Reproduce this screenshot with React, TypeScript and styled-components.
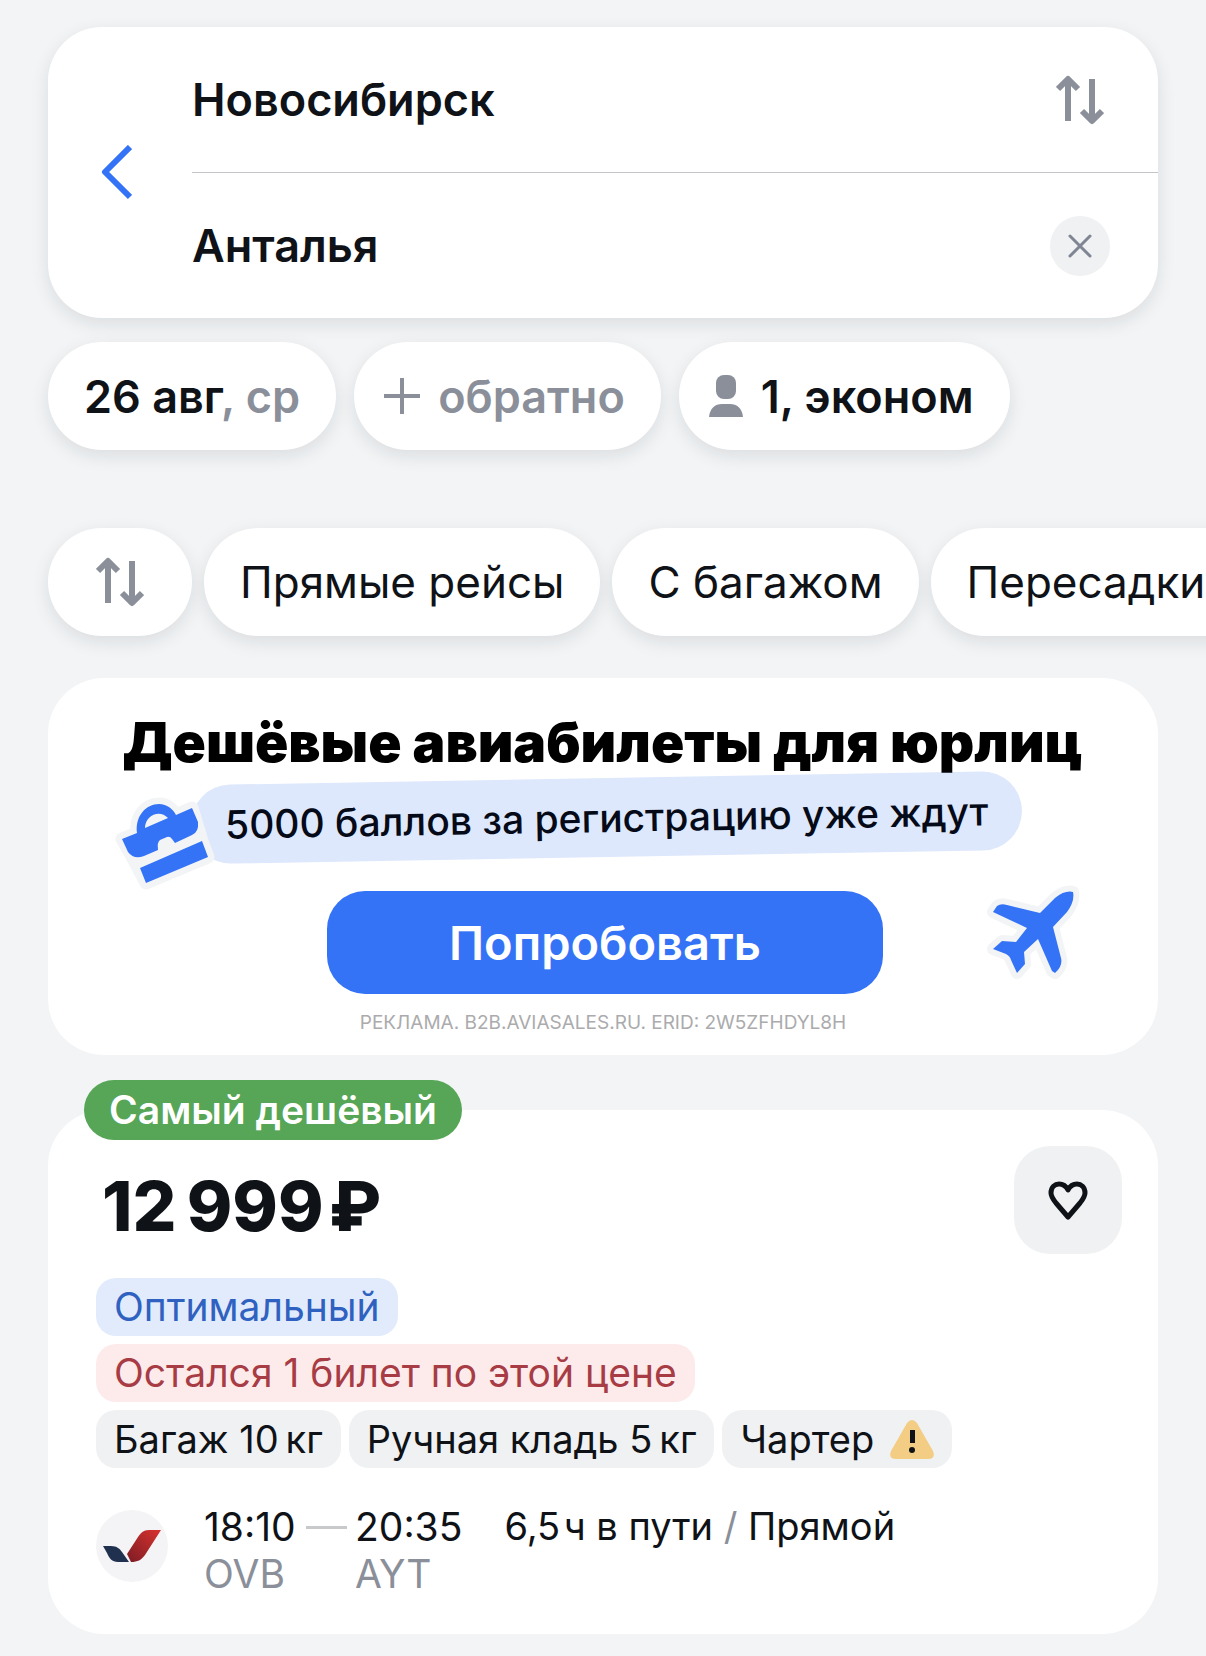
import React, { useState } from "react";
import styled, { createGlobalStyle } from "styled-components";

const colors = {
  page: "#f2f4f6",
  card: "#ffffff",
  text: "#0f1217",
  muted: "#8a8f9a",
  blue: "#3473f6",
  soft: "#f0f1f3",
};

interface Tag {
  label: string;
  tone: "info" | "alert" | "plain";
  warning?: boolean;
}

const FILTERS = ["Прямые рейсы", "С багажом", "Пересадки"];

const TAG_ROWS: Tag[][] = [
  [{ label: "Оптимальный", tone: "info" }],
  [{ label: "Остался 1 билет по этой цене", tone: "alert" }],
  [
    { label: "Багаж 10\u2009кг", tone: "plain" },
    { label: "Ручная кладь 5\u2009кг", tone: "plain" },
    { label: "Чартер", tone: "plain", warning: true },
  ],
];

const TAG_TONES = {
  info: { bg: "#e2ebfc", fg: "#2f62c0", size: 39 },
  alert: { bg: "#fdebec", fg: "#a83c45", size: 39 },
  plain: { bg: colors.soft, fg: colors.text, size: 38 },
};

const SwapIcon = () => (
  <svg width="48" height="50" viewBox="0 0 48 50" fill="none" stroke={colors.muted} strokeWidth="6">
    <path d="M12 46V4M2 14L12 4L22 14" strokeLinejoin="round" />
    <path d="M36 4V46M26 36L36 46L46 36" strokeLinejoin="round" />
  </svg>
);

const BackIcon = () => (
  <svg width="32" height="56" viewBox="0 0 32 56" fill="none" stroke={colors.blue} strokeWidth="6">
    <path d="M30 2L5 27L30 52" strokeLinejoin="round" />
  </svg>
);

const CloseIcon = () => (
  <svg width="24" height="24" viewBox="0 0 24 24" fill="none" stroke="#7f8592" strokeWidth="3">
    <path d="M2 2L22 22M22 2L2 22" strokeLinecap="round" />
  </svg>
);

const PlusIcon = () => (
  <svg width="36" height="36" viewBox="0 0 36 36" fill="none" stroke={colors.muted} strokeWidth="4">
    <path d="M18 0V36M0 18H36" />
  </svg>
);

const PersonIcon = () => (
  <svg width="34" height="42" viewBox="0 0 34 42" fill={colors.muted}>
    <rect x="7" y="0" width="20" height="24" rx="8" />
    <path d="M0 42C1 33 6 29 13 29H21C28 29 33 33 34 42Z" />
  </svg>
);

const HeartIcon = () => (
  <svg width="40" height="40" viewBox="0 0 40 40" fill="none" stroke={colors.text} strokeWidth="5">
    <path
      d="M20 37L8 23C4 18 3 16 3 13C3 7 7 4 11 4C15 4 18 6 20 10C22 6 25 4 29 4C33 4 37 7 37 13C37 16 36 18 32 23Z"
      strokeLinejoin="round"
    />
  </svg>
);

const WarningIcon = () => (
  <svg width="44" height="39" viewBox="0 0 44 39">
    <path d="M17 3Q22 -3 27 3L43 31Q46 39 38 39H6Q-2 39 1 31Z" fill="#f4cd84" />
    <rect x="20" y="10" width="5" height="13" fill={colors.text} />
    <circle cx="22" cy="30" r="3" fill={colors.text} />
  </svg>
);

const CASE_OUTLINE =
  "M123 839L138 833C136 816 147 804 160 804C168 804 174 809 177 815L193 808L203 841L209 857L147 883L131 853Z";

const CASE_SHAPE =
  "M123 839L138 833C136 816 147 804 160 804C168 804 174 809 177 815L193 808L199 822Q200 832 193 835L176 843L173 839Q171 836 168 837L161 840Q158 842 159 850L145 856Q135 860 129 852ZM146 828L169 818C161 809 146 815 146 828ZM141 868L203 841L209 857L147 883Z";

const CaseIcon = () => (
  <svg width="104" height="100" viewBox="112 794 104 100" fillRule="evenodd">
    <path d={CASE_OUTLINE} fill="#f2f4f6" stroke="#f2f4f6" strokeWidth="13" strokeLinejoin="round" />
    <path d={CASE_SHAPE} fill={colors.blue} />
  </svg>
);

const PLANE_SHAPE =
  "M1074 891Q1066 889 1056 897L1041 912L1008 904Q1002 902 998 905L994 911L1028 927L1017 941L1003 940L994 948L1007 953Q1011 955 1012 959L1018 972L1026 963L1025 951L1039 938L1053 970L1056 972Q1064 965 1062 957L1054 926L1068 911Q1076 900 1074 891Z";

const PlaneIcon = () => (
  <svg width="100" height="100" viewBox="984 882 100 100">
    <path d={PLANE_SHAPE} fill="#f2f4f6" stroke="#f2f4f6" strokeWidth="12" strokeLinejoin="round" />
    <path d={PLANE_SHAPE} fill={colors.blue} />
  </svg>
);

const AirlineLogo = () => (
  <svg width="72" height="72" viewBox="96 1510 72 72">
    <defs>
      <linearGradient id="wing" x1="1" y1="0" x2="0" y2="1">
        <stop offset="0" stopColor="#d9322f" />
        <stop offset="1" stopColor="#7c1c24" />
      </linearGradient>
    </defs>
    <circle cx="132" cy="1546" r="36" fill="#f4f4f6" />
    <path d="M103 1546H111C117 1546 120 1549 122 1552L129 1562H118C112 1562 109 1558 107 1553Z" fill="#20304f" />
    <path d="M161 1530H149C143 1530 141 1533 138 1537L127 1554L131 1562C138 1562 141 1560 145 1555Z" fill="url(#wing)" />
  </svg>
);

const App = () => {
  const [from, setFrom] = useState("Новосибирск");
  const [to, setTo] = useState("Анталья");
  const [liked, setLiked] = useState(false);

  const swapCities = () => {
    setFrom(to);
    setTo(from);
  };

  return (
    <>
      <GlobalStyle />
      <Page>
        <SearchCard>
          <BackButton aria-label="Назад">
            <BackIcon />
          </BackButton>
          <Cities>
            <CityRow>
              <CityInput aria-label="Откуда" value={from} onChange={(e) => setFrom(e.currentTarget.value)} />
              <RoundButton aria-label="Поменять местами" onClick={swapCities}>
                <SwapIcon />
              </RoundButton>
            </CityRow>
            <CityRow>
              <CityInput aria-label="Куда" value={to} onChange={(e) => setTo(e.currentTarget.value)} />
              <RoundButton aria-label="Очистить" $filled onClick={() => setTo("")}>
                <CloseIcon />
              </RoundButton>
            </CityRow>
          </Cities>
        </SearchCard>

        <ParamsRow>
          <Chip $bold>
            <span>
              26 авг<Muted>, ср</Muted>
            </span>
          </Chip>
          <Chip $bold $icon>
            <PlusIcon />
            <Muted>обратно</Muted>
          </Chip>
          <Chip $bold $icon>
            <PersonIcon />
            1, эконом
          </Chip>
        </ParamsRow>

        <FiltersRow>
          <SortChip aria-label="Сортировка">
            <SwapIcon />
          </SortChip>
          {FILTERS.map((label) => (
            <FilterChip key={label}>{label}</FilterChip>
          ))}
        </FiltersRow>

        <Banner>
          <BannerHead>
            <BannerTitle>Дешёвые авиабилеты для юрлиц</BannerTitle>
            <BannerNote>
              <NotePill>5000 баллов за регистрацию уже ждут</NotePill>
              <CaseSticker>
                <CaseIcon />
              </CaseSticker>
            </BannerNote>
          </BannerHead>
          <BannerActions>
            <TryButton>Попробовать</TryButton>
            <PlaneIcon />
          </BannerActions>
          <Legal>РЕКЛАМА. B2B.AVIASALES.RU. ERID: 2W5ZFHDYL8H</Legal>
        </Banner>

        <Ticket>
          <CheapestBadge>Самый дешёвый</CheapestBadge>
          <TicketHead>
            <Price>12{"\u2009"}999{"\u200a"}₽</Price>
            <LikeButton aria-label="В избранное" aria-pressed={liked} onClick={() => setLiked(!liked)}>
              <HeartIcon />
            </LikeButton>
          </TicketHead>
          <Tags>
            {TAG_ROWS.map((row, i) => (
              <TagRow key={i}>
                {row.map((tag) => (
                  <TagItem key={tag.label} $tone={tag.tone}>
                    {tag.label}
                    {tag.warning && <WarningIcon />}
                  </TagItem>
                ))}
              </TagRow>
            ))}
          </Tags>
          <Flight>
            <AirlineLogo />
            <Route>
              <Point>
                18:10
                <Airport>OVB</Airport>
              </Point>
              <Dash />
              <Point>
                20:35
                <Airport>AYT</Airport>
              </Point>
            </Route>
            <Details>
              6,5{"\u200a"}ч в пути <Muted>/</Muted> Прямой
            </Details>
          </Flight>
        </Ticket>
      </Page>
    </>
  );
};

export default App;

const GlobalStyle = createGlobalStyle`
  * {
    box-sizing: border-box;
  }

  body {
    margin: 0;
    background: ${colors.page};
    color: ${colors.text};
    font-family: Inter, "Liberation Sans", sans-serif;
  }

  button, input {
    margin: 0;
    padding: 0;
    border: 0;
    background: none;
    color: inherit;
    font: inherit;
  }

  button {
    cursor: pointer;
  }

  svg {
    display: block;
    flex-shrink: 0;
  }
`;

const Page = styled.main`
  padding: 27px 48px 22px;
  overflow: hidden;
`;

const SearchCard = styled.section`
  display: flex;
  border-radius: 54px;
  background: ${colors.card};
  box-shadow: 0 6px 18px rgba(20, 30, 25, 0.1);
`;

const BackButton = styled.button`
  display: flex;
  align-items: center;
  width: 144px;
  padding-left: 52px;
`;

const Cities = styled.div`
  flex: 1;
  min-width: 0;
`;

const CityRow = styled.div`
  display: flex;
  align-items: center;
  height: 145px;
  padding-right: 48px;

  & + & {
    height: 146px;
    border-top: 1px solid #c3c5c9;
  }
`;

const CityInput = styled.input`
  flex: 1;
  min-width: 0;
  height: 60px;
  outline: none;
  font-size: 45px;
  font-weight: 600;
`;

const RoundButton = styled.button<{ $filled?: boolean }>`
  display: flex;
  align-items: center;
  justify-content: center;
  width: 60px;
  height: 60px;
  border-radius: 50%;
  background: ${({ $filled }) => ($filled ? colors.soft : "none")};
`;

const ParamsRow = styled.div`
  display: flex;
  gap: 18px;
  margin-top: 24px;
`;

const FiltersRow = styled.div`
  display: flex;
  gap: 12px;
  margin-top: 78px;
`;

const Chip = styled.button<{ $bold?: boolean; $icon?: boolean }>`
  display: flex;
  flex-shrink: 0;
  align-items: center;
  justify-content: center;
  gap: 18px;
  height: 108px;
  padding: 0 36px 0 ${({ $icon }) => ($icon ? 30 : 36)}px;
  border-radius: 54px;
  background: ${colors.card};
  box-shadow: 0 6px 18px rgba(20, 30, 25, 0.1);
  font-size: ${({ $bold }) => ($bold ? 45 : 44)}px;
  font-weight: ${({ $bold }) => ($bold ? 600 : 400)};
  white-space: nowrap;
`;

const FilterChip = styled(Chip)`
  padding: 0 36px;

  /* the last chip runs on past the edge of the screen */
  &:last-child {
    padding-right: 96px;
  }
`;

const SortChip = styled(Chip)`
  width: 144px;
`;

const Muted = styled.span`
  color: ${colors.muted};
`;

const Banner = styled.section`
  display: flex;
  flex-direction: column;
  align-items: center;
  margin-top: 42px;
  padding: 32px 0 20px;
  border-radius: 56px;
  background: ${colors.card};
`;

const BannerHead = styled.div`
  display: flex;
  flex-direction: column;
  align-items: center;
`;

const BannerTitle = styled.h2`
  position: relative;
  z-index: 1;
  margin: 0;
  color: #000;
  font-size: 55px;
  font-weight: 900;
  line-height: 64px;
  white-space: nowrap;
`;

const BannerNote = styled.div`
  position: relative;
  margin: 4px 0 0 8px;
`;

const NotePill = styled.p`
  margin: 0;
  padding: 0 34px;
  border-radius: 40px;
  background: #dde8fc;
  color: #050a18;
  font-size: 39px;
  font-weight: 500;
  line-height: 79px;
  white-space: nowrap;
  transform: rotate(-1deg);
`;

const CaseSticker = styled.div`
  position: absolute;
  top: 16px;
  left: -80px;
`;

const BannerActions = styled.div`
  display: grid;
  grid-template-columns: 1fr 556px 1fr;
  align-items: center;
  justify-items: center;
  width: 100%;
  margin-top: 34px;
  padding-left: 4px;

  svg {
    margin: -20px 0 0 24px;
  }
`;

const TryButton = styled.button`
  grid-column: 2;
  width: 100%;
  height: 103px;
  border-radius: 38px;
  background: ${colors.blue};
  color: #fff;
  font-size: 47px;
  font-weight: 600;
`;

const Legal = styled.p`
  margin: 17px 0 0;
  color: #ababad;
  font-size: 19px;
  line-height: 24px;
`;

const Ticket = styled.article`
  position: relative;
  margin-top: 55px;
  padding: 36px 36px 37px 48px;
  border-radius: 56px;
  background: ${colors.card};
`;

const CheapestBadge = styled.div`
  position: absolute;
  top: -30px;
  left: 36px;
  padding: 0 25px;
  border-radius: 30px;
  background: #57a556;
  color: #fff;
  font-size: 39px;
  font-weight: 600;
  line-height: 60px;
`;

const TicketHead = styled.div`
  display: flex;
  justify-content: space-between;
`;

const Price = styled.div`
  padding: 24px 0 0 6px;
  font-size: 69px;
  font-weight: 800;
  line-height: 72px;
`;

const LikeButton = styled.button`
  display: flex;
  align-items: center;
  justify-content: center;
  width: 108px;
  height: 108px;
  border-radius: 36px;
  background: ${colors.soft};
`;

const Tags = styled.div`
  display: flex;
  flex-direction: column;
  gap: 8px;
  margin-top: 24px;
`;

const TagRow = styled.div`
  display: flex;
  gap: 8px;
`;

const TagItem = styled.span<{ $tone: Tag["tone"] }>`
  display: flex;
  align-items: center;
  gap: 16px;
  padding: 0 18px;
  border-radius: 20px;
  background: ${({ $tone }) => TAG_TONES[$tone].bg};
  color: ${({ $tone }) => TAG_TONES[$tone].fg};
  font-size: ${({ $tone }) => TAG_TONES[$tone].size}px;
  line-height: 58px;
  white-space: nowrap;
`;

const Flight = styled.div`
  display: flex;
  align-items: flex-start;
  margin-top: 35px;
  font-size: 39px;
  line-height: 47px;
  white-space: nowrap;

  & > svg {
    margin-top: 7px;
  }
`;

const Route = styled.div`
  display: flex;
  gap: 8px;
  margin: 0 42px 0 36px;
`;

const Point = styled.div`
  display: flex;
  flex-direction: column;
  min-width: 94px;
`;

const Airport = styled.span`
  color: ${colors.muted};
`;

const Dash = styled.div`
  width: 41px;
  height: 3px;
  margin-top: 23px;
  background: #c8c9cb;
`;

const Details = styled.span`
  font-size: 38px;
`;
